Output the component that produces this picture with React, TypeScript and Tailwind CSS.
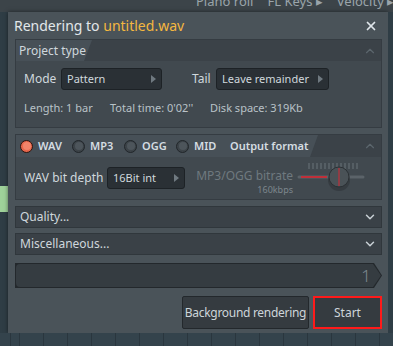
import { ChevronDown, ChevronUp, X } from "lucide-react";

const font = { fontFamily: '"Noto Sans", "Liberation Sans", sans-serif' };

function Dropdown({ label, width }: { label: string; width: string }) {
    return (
        <div className={`flex h-[22px] ${width} items-center justify-between rounded-[3px] border border-[#1d2226] bg-[#2a3035] pl-[5px] pr-[5px] text-[#d0d8dd]`}>
            <span>{label}</span>
            <span className="h-0 w-0 border-y-[4px] border-l-[5px] border-y-transparent border-l-[#6f7980]" />
        </div>
    );
}

function Radio({ label, active }: { label: string; active?: boolean }) {
    return (
        <div className="flex w-[52px] shrink-0 items-center gap-[5px]">
            <span
                className={`flex h-[13px] w-[13px] items-center justify-center rounded-full border ${
                    active ? "border-[#2a1510] bg-[#e7674c]" : "border-[#22272b] bg-[#3c4348]"
                }`}
            >
                <span className={`h-[8px] w-[8px] rounded-full ${active ? "bg-[#f2846a]" : "bg-[#4d555b]"}`} />
            </span>
            <span className="font-semibold text-[#d5dde2]">{label}</span>
        </div>
    );
}

export default function App() {
    return (
        <div className="flex h-[346px] w-[393px] flex-col overflow-hidden whitespace-nowrap bg-[#34434c] text-[11px]" style={font}>
            {/* Background toolbar */}
            <div className="flex h-[12px] shrink-0 items-start gap-[14px] overflow-hidden bg-[#3c4449] pl-[196px] text-[13px] leading-[13px] text-[#9aa4aa]">
                <span className="mt-[-5px]">Piano roll</span>
                <span className="mt-[-5px]">FL Keys ▸</span>
                <span className="mt-[-5px]">Velocity ▸</span>
            </div>

            <div className="flex h-[321px] shrink-0">
                {/* Left strip of piano roll */}
                <div className="flex w-[8px] flex-col bg-[#2f3d45]">
                    <div className="mt-[174px] h-[26px] bg-[#9fd29a]" />
                </div>

                {/* Dialog */}
                <div className="flex w-[380px] flex-col bg-[#4a5359] pl-[7px] pr-[6px] shadow-[0_0_4px_rgba(0,0,0,0.5)]">
                    <div className="flex h-[27px] items-center justify-between">
                        <div className="ml-[-1px] text-[14px] text-[#e2e7ea]">
                            Rendering to <span className="text-[#f4b73f]">untitled.wav</span>
                        </div>
                        <X size={14} strokeWidth={3} className="mr-[4px] text-[#dfe6ea]" />
                    </div>

                    {/* Project type */}
                    <div className="flex h-[89px] flex-col border border-[#353c42] bg-[#41494f]">
                        <div className="flex h-[21px] items-stretch bg-[#3b4248]">
                            <div className="flex w-[76px] items-center bg-[#475057] pl-[3px] text-[12px] text-[#cfd7dc] [clip-path:polygon(0_0,100%_0,calc(100%-8px)_100%,0_100%)]">
                                Project type
                            </div>
                            <div className="flex-1" />
                            <ChevronUp size={14} className="mr-[4px] self-center text-[#5c666d]" />
                        </div>
                        <div className="mt-[7px] flex items-center pl-[8px]">
                            <span className="w-[37px] text-[12px] text-[#d0d8dd]">Mode</span>
                            <Dropdown label="Pattern" width="w-[101px]" />
                            <span className="ml-[30px] w-[24px] text-[12px] text-[#d0d8dd]">Tail</span>
                            <Dropdown label="Leave remainder" width="w-[113px]" />
                        </div>
                        <div className="mt-[10px] flex pl-[8px] text-[#b9c2c8]">
                            <span className="w-[86px]">Length: 1 bar</span>
                            <span className="w-[100px]">Total time: 0'02''</span>
                            <span>Disk space: 319Kb</span>
                        </div>
                    </div>

                    {/* Output format */}
                    <div className="mt-[6px] flex h-[66px] flex-col border border-[#353c42] bg-[#41494f]">
                        <div className="flex h-[22px] items-stretch bg-[#3b4248]">
                            <div className="flex w-[302px] items-center bg-[#475057] pl-[4px] [clip-path:polygon(0_0,100%_0,calc(100%-8px)_100%,0_100%)]">
                                <Radio label="WAV" active />
                                <Radio label="MP3" />
                                <Radio label="OGG" />
                                <Radio label="MID" />
                                <span className="ml-[2px] font-semibold text-[#d5dde2]">Output format</span>
                            </div>
                            <div className="flex-1" />
                            <ChevronUp size={14} className="mr-[4px] self-center text-[#5c666d]" />
                        </div>
                        <div className="flex flex-1 items-center pl-[8px]">
                            <span className="w-[83px] text-[12px] text-[#d0d8dd]">WAV bit depth</span>
                            <Dropdown label="16Bit int" width="w-[78px]" />
                            <div className="ml-[12px] flex w-[96px] flex-col items-end pt-[6px]">
                                <span className="text-[12px] leading-[13px] text-[#6f797f]">MP3/OGG bitrate</span>
                                <span className="mt-[3px] text-[9px] leading-[9px] text-[#7d878d]">160kbps</span>
                            </div>
                            <svg width="70" height="34" viewBox="0 0 70 34" className="ml-[4px] shrink-0">
                                {[...Array(13)].map((_, i) => (
                                    <line key={i} x1={12 + i * 4} y1={2} x2={12 + i * 4} y2={8} stroke="#6b747a" strokeWidth="1" />
                                ))}
                                <line x1="2" y1="16" x2="66" y2="16" stroke="#5b6369" strokeWidth="3" strokeLinecap="round" />
                                <line x1="4" y1="16" x2="30" y2="16" stroke="#c0303a" strokeWidth="2" />
                                <circle cx="42" cy="19" r="11" fill="#2f3438" opacity="0.6" />
                                <circle cx="42" cy="16" r="10" fill="#4a5257" stroke="#2c3135" />
                                <line x1="42" y1="7" x2="42" y2="25" stroke="#c0303a" strokeWidth="1.2" />
                            </svg>
                        </div>
                    </div>

                    <div className="mt-[6px] flex h-[22px] items-center justify-between border border-[#30373c] bg-[#3a4147] pl-[4px] pr-[4px] text-[12px] text-[#cfd7dc]">
                        <span>Quality...</span>
                        <ChevronDown size={14} strokeWidth={2.5} className="text-[#c9d1d6]" />
                    </div>
                    <div className="mt-[5px] flex h-[22px] items-center justify-between border border-[#30373c] bg-[#3a4147] pl-[4px] pr-[4px] text-[12px] text-[#cfd7dc]">
                        <span>Miscellaneous...</span>
                        <ChevronDown size={14} strokeWidth={2.5} className="text-[#c9d1d6]" />
                    </div>

                    {/* Progress */}
                    <div className="mt-[8px] h-[25px] bg-[#23282c] p-px [clip-path:polygon(0_0,calc(100%-8px)_0,100%_50%,calc(100%-8px)_100%,0_100%)]">
                        <div className="flex h-full items-center justify-end rounded-l-[4px] bg-[#353c41] pr-[10px] text-[17px] font-light text-[#7d888f] [clip-path:polygon(0_0,calc(100%-8px)_0,100%_50%,calc(100%-8px)_100%,0_100%)]">
                            1
                        </div>
                    </div>

                    {/* Buttons */}
                    <div className="mt-[8px] flex justify-end gap-[4px]">
                        <button className="flex h-[33px] w-[127px] items-center justify-center rounded-[2px] border border-[#23282c] bg-[#353b40] text-[12px] tracking-[-0.3px] text-[#cdd5da]">
                            Background rendering
                        </button>
                        <button className="flex h-[33px] w-[69px] items-center justify-center border-2 border-[#ff1a1a] bg-[#353b40] text-[12px] text-[#cdd5da]">
                            Start
                        </button>
                    </div>
                </div>

                <div className="flex-1 bg-[#2f3d45]" />
            </div>

            {/* Piano roll grid below */}
            <div className="flex-1 bg-[#34434c] bg-[repeating-linear-gradient(90deg,#2a363e_0px,#2a363e_1px,transparent_1px,transparent_24px)] bg-[position:19px_0]" />
        </div>
    );
}
